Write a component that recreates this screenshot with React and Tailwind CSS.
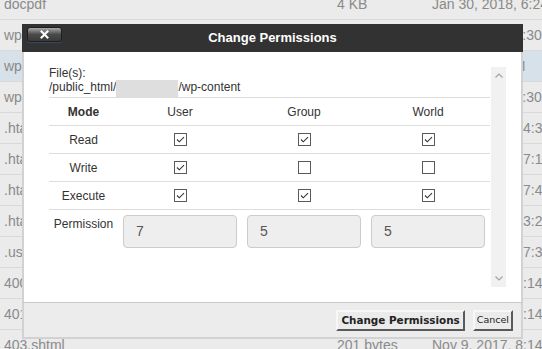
import React from "react";

const rows = [
  { name: "docpdf", size: "4 KB", date: "Jan 30, 2018, 6:24 PM" },
  { name: "wp-admin", size: "4 KB", date: "Feb 1, 2018, 6:30 AM" },
  { name: "wp-content", size: "4 KB", date: "Today 3:05 PM", hl: true },
  { name: "wp-includes", size: "12 KB", date: "Feb 1, 2018, 6:30 AM" },
  { name: ".htaccess", size: "1.02 KB", date: "Nov 13, 2017, 4:36 PM" },
  { name: ".htaccess.bak", size: "512 bytes", date: "Nov 16, 2017, 7:12 PM" },
  { name: ".htaccess.old", size: "498 bytes", date: "Nov 16, 2017, 7:40 PM" },
  { name: ".htaccess.wp", size: "236 bytes", date: "Nov 13, 2017, 3:24 PM" },
  { name: ".user.ini", size: "66 bytes", date: "Nov 16, 2017, 7:36 PM" },
  { name: "400.shtml", size: "201 bytes", date: "Nov 9, 2017, 8:14 AM" },
  { name: "401.shtml", size: "201 bytes", date: "Nov 9, 2017, 8:14 AM" },
  { name: "403.shtml", size: "201 bytes", date: "Nov 9, 2017, 8:14 AM" },
];

function Check({ on }) {
  return (
    <svg width="13" height="13" viewBox="0 0 13 13" className="block">
      <rect x="0.5" y="0.5" width="12" height="12" fill="#fff" stroke="#5a5a5a" />
      {on && (
        <polyline points="3,6.5 5.3,8.8 10,4.2" fill="none" stroke="#333" strokeWidth="1.1" />
      )}
    </svg>
  );
}

const perms = [
  { label: "Read", v: [true, true, true] },
  { label: "Write", v: [true, false, false] },
  { label: "Execute", v: [true, true, true] },
];

export default function App() {
  return (
    <div
      className="relative w-[542px] h-[349px] overflow-hidden bg-[#ebebeb]"
      style={{ fontFamily: '"Liberation Sans", Arial, sans-serif' }}
    >
      {/* background file list */}
      <div className="-mt-[11px]">
        {rows.map((r, i) => (
          <div
            key={i}
            className={`flex items-center h-[31px] border-b border-[#d9d9d9] text-[14px] text-[#8a8a8a] ${
              r.hl ? "bg-[#d7e1e9]" : "bg-[#ebebeb]"
            }`}
          >
            <div className="w-[332px] shrink-0 pl-[4px] whitespace-nowrap">{r.name}</div>
            <div className="w-[98px] shrink-0 pl-[5px] whitespace-nowrap">{r.size}</div>
            <div className="shrink-0 pl-[2px] whitespace-nowrap">{r.date}</div>
          </div>
        ))}
      </div>

      {/* dialog */}
      <div className="absolute left-[22px] top-[24px] w-[501px] flex flex-col">
        <div className="h-[28px] bg-[#323232] flex items-start">
          <div className="w-[40px] pl-[5px] pt-[3px]">
            <div className="w-[35px] h-[15px] rounded-[3px] border border-[#1e1e1e] bg-gradient-to-b from-[#a9a9a9] via-[#4a4a4a] to-[#3a3a3a] shadow-[0_1px_1px_rgba(60,80,110,0.8)] flex items-center justify-center">
              <svg width="9" height="9" viewBox="0 0 9 9">
                <path d="M1.5 1.5 L7.5 7.5 M7.5 1.5 L1.5 7.5" stroke="#fff" strokeWidth="2" strokeLinecap="square" />
              </svg>
            </div>
          </div>
          <div className="flex-1 h-[28px] flex items-center justify-center text-white font-bold text-[13px]">
            Change Permissions
          </div>
          <div className="w-[40px]" />
        </div>

        <div className="border-x-[2px] border-[#d2d2d2] bg-white h-[250px] pt-[15px] px-[15px] pb-[15px] flex">
          <div className="flex-1 pl-[10px] text-[12px] text-[#333]">
            <div className="leading-[13px]">File(s):</div>
            <div className="leading-[14px] flex items-end h-[14px]">
              <span>/public_html/</span>
              <span className="inline-block w-[62px] h-[17px] bg-[#dedede] translate-y-[3px]" />
              <span>/wp-content</span>
            </div>
            <div className="mt-[3px] grid grid-cols-[69px_124px_124px_124px]">
              <div className="h-[28px] border-t border-[#dddddd] flex items-center justify-center font-bold">Mode</div>
              <div className="h-[28px] border-t border-[#dddddd] flex items-center justify-center">User</div>
              <div className="h-[28px] border-t border-[#dddddd] flex items-center justify-center">Group</div>
              <div className="h-[28px] border-t border-[#dddddd] flex items-center justify-center">World</div>
              {perms.map((p) => (
                <React.Fragment key={p.label}>
                  <div className="h-[28px] border-t border-[#dddddd] flex items-center justify-center">{p.label}</div>
                  {p.v.map((on, j) => (
                    <div key={j} className="h-[28px] border-t border-[#dddddd] flex items-center justify-center">
                      <Check on={on} />
                    </div>
                  ))}
                </React.Fragment>
              ))}
              <div className="border-t border-[#dddddd] pt-[5px] text-center">Permission</div>
              {["7", "5", "5"].map((n, j) => (
                <div key={j} className="border-t border-[#dddddd] pt-[5px] px-[5px]">
                  <div className="h-[33px] rounded-[4px] border border-[#cccccc] bg-[#eeeeee] flex items-center pl-[12px] text-[14px] text-[#555]">
                    {n}
                  </div>
                </div>
              ))}
            </div>
          </div>
          <div className="w-[15px] bg-[#f1f1f1] flex flex-col items-center justify-between py-[6px]">
            <svg width="8" height="5" viewBox="0 0 8 5">
              <polyline points="0.5,4.5 4,1 7.5,4.5" fill="none" stroke="#a3a3a3" strokeWidth="1.2" />
            </svg>
            <svg width="8" height="5" viewBox="0 0 8 5">
              <polyline points="0.5,0.5 4,4 7.5,0.5" fill="none" stroke="#a3a3a3" strokeWidth="1.2" />
            </svg>
          </div>
        </div>

        <div className="h-[37px] border-x-[2px] border-b-[2px] border-[#d2d2d2] bg-[#ececec] border-t border-t-[#c9c9c9] flex items-center justify-end pr-[8px] gap-[8px]"
          style={{ fontFamily: '"DejaVu Sans", Verdana, sans-serif' }}
        >
          <button className="h-[21px] px-[3px] bg-[#ebebeb] border-2 border-t-[#f7f7f7] border-l-[#f7f7f7] border-r-[#5a5a5a] border-b-[#5a5a5a] text-[10.4px] font-bold text-[#222] leading-none whitespace-nowrap">
            Change Permissions
          </button>
          <button className="h-[21px] px-[2px] bg-[#ebebeb] border-2 border-t-[#f7f7f7] border-l-[#f7f7f7] border-r-[#5a5a5a] border-b-[#5a5a5a] text-[9.5px] text-[#222] leading-none whitespace-nowrap">
            Cancel
          </button>
        </div>
      </div>
    </div>
  );
}
